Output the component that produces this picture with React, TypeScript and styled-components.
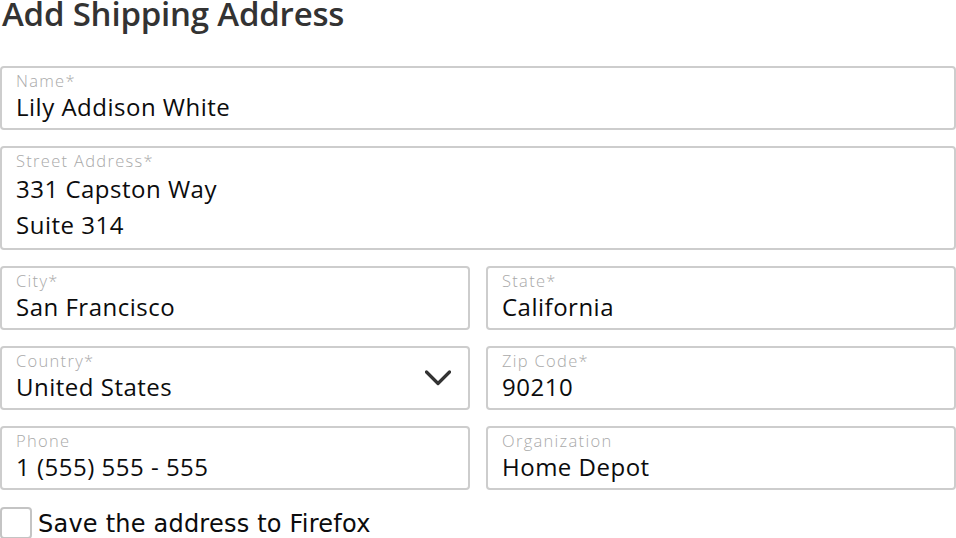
import React from "react";
import styled, { createGlobalStyle } from "styled-components";

const Global = createGlobalStyle`
  html, body { margin: 0; padding: 0; background: #ffffff; }
  body { font-family: "Open Sans", "Noto Sans", sans-serif; color: #0c0c0d; }
  * { box-sizing: border-box; }
`;

const Page = styled.div`
  width: 956px;
  display: flex;
  flex-direction: column;
`;

const Title = styled.h1`
  margin: 0;
  height: 66px;
  padding-left: 2px;
  font-size: 33px;
  line-height: 28px;
  font-weight: 600;
  color: #333333;
  letter-spacing: -0.2px;
  white-space: nowrap;
`;

const Grid = styled.div`
  display: grid;
  grid-template-columns: 1fr 1fr;
  column-gap: 16px;
  row-gap: 16px;
`;

const Field = styled.div<{ $full?: boolean }>`
  grid-column: ${(p) => (p.$full ? "1 / -1" : "auto")};
  position: relative;
  border: 2px solid #cdcdcd;
  border-radius: 4px;
  padding: 3px 14px 5px 14px;
  display: flex;
  flex-direction: column;
`;

const Label = styled.span`
  font-size: 16.5px;
  line-height: 20px;
  font-weight: 300;
  letter-spacing: 1.3px;
  color: #a9a9a9;
`;

const Value = styled.span<{ $multi?: boolean }>`
  font-size: 24px;
  line-height: ${(p) => (p.$multi ? "36px" : "32px")};
  letter-spacing: 0.5px;
  color: #0c0c0d;
  white-space: pre-line;
`;

const Chevron = styled.svg`
  position: absolute;
  right: 17px;
  top: 50%;
  transform: translateY(-50%);
  width: 26px;
  height: 16px;
`;

const CheckRow = styled.label`
  margin-top: 16px;
  display: flex;
  align-items: center;
  gap: 6px;
  font-family: "DejaVu Sans", "Liberation Sans", sans-serif;
  font-size: 24px;
  line-height: 32px;
  letter-spacing: 0.22px;
  color: #0c0c0d;
`;

const CheckText = styled.span`
  padding-top: 2px;
`;

const Box = styled.span`
  width: 32px;
  height: 32px;
  border: 2px solid #c4c4c4;
  border-radius: 4px;
  flex: none;
`;

type F = { label: string; value: string; full?: boolean; multi?: boolean; select?: boolean };

const fields: F[] = [
  { label: "Name*", value: "Lily Addison White", full: true },
  { label: "Street Address*", value: "331 Capston Way\nSuite 314", full: true, multi: true },
  { label: "City*", value: "San Francisco" },
  { label: "State*", value: "California" },
  { label: "Country*", value: "United States", select: true },
  { label: "Zip Code*", value: "90210" },
  { label: "Phone", value: "1 (555) 555 - 555" },
  { label: "Organization", value: "Home Depot" },
];

export default function App() {
  return (
    <Page>
      <Global />
      <Title>Add Shipping Address</Title>
      <Grid>
        {fields.map((f) => (
          <Field key={f.label} $full={f.full}>
            <Label>{f.label}</Label>
            <Value $multi={f.multi}>{f.value}</Value>
            {f.select && (
              <Chevron viewBox="0 0 26 16">
                <polyline
                  points="1.5,2 13,13.5 24.5,2"
                  fill="none"
                  stroke="#333333"
                  strokeWidth="3.2"
                  strokeLinecap="round"
                  strokeLinejoin="round"
                />
              </Chevron>
            )}
          </Field>
        ))}
      </Grid>
      <CheckRow>
        <Box />
        <CheckText>Save the address to Firefox</CheckText>
      </CheckRow>
    </Page>
  );
}
